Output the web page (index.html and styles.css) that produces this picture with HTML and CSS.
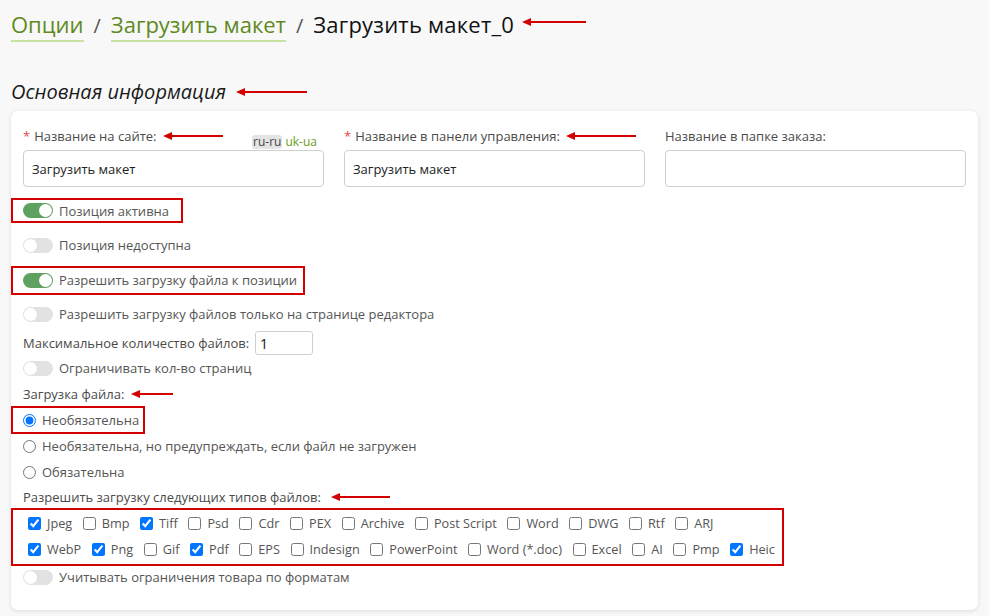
FILE: index.html
```html
<!DOCTYPE html>
<html lang="ru">
<head>
<meta charset="utf-8">
<title>Загрузить макет_0</title>
<link rel="stylesheet" href="styles.css">
</head>
<body>
<nav class="crumbs">
  <a class="crumb-link" href="#">Опции</a><span class="crumb-sep">/</span><a class="crumb-link" href="#">Загрузить макет</a><span class="crumb-sep">/</span><span class="crumb-current">Загрузить макет_0</span><svg class="arrow arrow-crumb" width="64" height="10" viewBox="0 0 64 10"><path d="M8 5H64" stroke="#d40000" stroke-width="2"/><path d="M0 5L9 1V9Z" fill="#d40000"/></svg>
</nav>

<h2 class="section-title">Основная информация
  <svg class="arrow arrow-section" width="71" height="10" viewBox="0 0 71 10"><path d="M8 5H71" stroke="#d40000" stroke-width="2"/><path d="M0 5L9 1V9Z" fill="#d40000"/></svg>
</h2>

<section class="card">
  <div class="fields">
    <div class="field">
      <div class="field-label">
        <span><span class="req">*</span> Название на сайте:<svg class="arrow arrow-label" width="60" height="10" viewBox="0 0 60 10"><path d="M8 5H60" stroke="#d40000" stroke-width="2"/><path d="M0 5L9 1V9Z" fill="#d40000"/></svg></span>
        <span class="langs"><span class="lang lang-active">ru-ru</span><span class="lang">uk-ua</span></span>
      </div>
      <input class="text-input" type="text" value="Загрузить макет">
    </div>
    <div class="field">
      <div class="field-label">
        <span><span class="req">*</span> Название в панели управления:<svg class="arrow arrow-label" width="70" height="10" viewBox="0 0 70 10"><path d="M8 5H70" stroke="#d40000" stroke-width="2"/><path d="M0 5L9 1V9Z" fill="#d40000"/></svg></span>
      </div>
      <input class="text-input" type="text" value="Загрузить макет">
    </div>
    <div class="field">
      <div class="field-label"><span>Название в папке заказа:</span></div>
      <input class="text-input" type="text" value="">
    </div>
  </div>

  <div class="rows">
    <div class="row row-t1">
      <div class="hl hl-a"><span class="switch on"></span><span class="row-text">Позиция активна</span></div>
    </div>
    <div class="row row-t2"><span class="switch"></span><span class="row-text">Позиция недоступна</span></div>
    <div class="row row-t3">
      <div class="hl hl-b"><span class="switch on"></span><span class="row-text">Разрешить загрузку файла к позиции</span></div>
    </div>
    <div class="row row-t4"><span class="switch"></span><span class="row-text">Разрешить загрузку файлов только на странице редактора</span></div>
    <div class="row row-num"><span class="row-plain">Максимальное количество файлов:</span><input class="num-input" type="text" value="1"></div>
    <div class="row"><span class="switch"></span><span class="row-text">Ограничивать кол-во страниц</span></div>
    <div class="row"><span class="row-plain">Загрузка файла:</span><svg class="arrow arrow-label2" width="42" height="10" viewBox="0 0 42 10"><path d="M8 5H42" stroke="#d40000" stroke-width="2"/><path d="M0 5L9 1V9Z" fill="#d40000"/></svg></div>
    <div class="row">
      <label class="hl hl-c"><input type="radio" name="upl" class="radio" checked><span class="radio-text">Необязательна</span></label>
    </div>
    <div class="row"><label class="radio-label"><input type="radio" name="upl" class="radio"><span class="radio-text">Необязательна, но предупреждать, если файл не загружен</span></label></div>
    <div class="row"><label class="radio-label"><input type="radio" name="upl" class="radio"><span class="radio-text">Обязательна</span></label></div>
    <div class="row row-short"><span class="row-plain">Разрешить загрузку следующих типов файлов:</span><svg class="arrow arrow-label3" width="59" height="10" viewBox="0 0 59 10"><path d="M8 5H59" stroke="#d40000" stroke-width="2"/><path d="M0 5L9 1V9Z" fill="#d40000"/></svg></div>
    <div class="types">
      <div class="types-row">
        <label class="cb"><input type="checkbox" checked><span>Jpeg</span></label>
        <label class="cb"><input type="checkbox"><span>Bmp</span></label>
        <label class="cb"><input type="checkbox" checked><span>Tiff</span></label>
        <label class="cb"><input type="checkbox"><span>Psd</span></label>
        <label class="cb"><input type="checkbox"><span>Cdr</span></label>
        <label class="cb"><input type="checkbox"><span>PEX</span></label>
        <label class="cb"><input type="checkbox"><span>Archive</span></label>
        <label class="cb"><input type="checkbox"><span>Post Script</span></label>
        <label class="cb"><input type="checkbox"><span>Word</span></label>
        <label class="cb"><input type="checkbox"><span>DWG</span></label>
        <label class="cb"><input type="checkbox"><span>Rtf</span></label>
        <label class="cb"><input type="checkbox"><span>ARJ</span></label>
      </div>
      <div class="types-row">
        <label class="cb"><input type="checkbox" checked><span>WebP</span></label>
        <label class="cb"><input type="checkbox" checked><span>Png</span></label>
        <label class="cb"><input type="checkbox"><span>Gif</span></label>
        <label class="cb"><input type="checkbox" checked><span>Pdf</span></label>
        <label class="cb"><input type="checkbox"><span>EPS</span></label>
        <label class="cb"><input type="checkbox"><span>Indesign</span></label>
        <label class="cb"><input type="checkbox"><span>PowerPoint</span></label>
        <label class="cb"><input type="checkbox"><span>Word (*.doc)</span></label>
        <label class="cb"><input type="checkbox"><span>Excel</span></label>
        <label class="cb"><input type="checkbox"><span>AI</span></label>
        <label class="cb"><input type="checkbox"><span>Pmp</span></label>
        <label class="cb"><input type="checkbox" checked><span>Heic</span></label>
      </div>
    </div>
    <div class="row row-last"><span class="switch"></span><span class="row-text">Учитывать ограничения товара по форматам</span></div>
  </div>
</section>
</body>
</html>
```

FILE: styles.css
```css
* { box-sizing: border-box; }

html, body {
  margin: 0;
  padding: 0;
  background: #f8f8f8;
}

body {
  padding: 0 11px;
  font-family: "Open Sans", "Noto Sans", "Liberation Sans", sans-serif;
  color: #4a4a4a;
  font-size: 13px;
  height: 616px;
  overflow: hidden;
  white-space: nowrap;
}

.arrow { display: inline-block; vertical-align: middle; }

/* breadcrumbs */
.crumbs {
  display: flex;
  align-items: baseline;
  height: 32px;
  margin-top: 9px;
  font-size: 22px;
  line-height: 30px;
}
.crumb-link {
  color: #5e8a1d;
  text-decoration: none;
  border-bottom: 2px solid #c8e2a4;
  padding-bottom: 1px;
}
.crumb-sep {
  color: #555;
  margin: 0 10px;
  font-size: 20px;
}
.crumb-current { color: #111; letter-spacing: 0.2px; }
.arrow-crumb { margin-left: 8px; align-self: center; margin-top: -6px; }

/* section title */
.section-title {
  margin: 37px 0 0;
  height: 27px;
  font-size: 20px;
  font-weight: 400;
  font-style: italic;
  color: #1a1a1a;
  line-height: 27px;
  display: flex;
  align-items: center;
}
.arrow-section { margin-left: 10px; }

/* card */
.card {
  margin-top: 6px;
  background: #fff;
  border-radius: 7px;
  box-shadow: 0 1px 4px rgba(0,0,0,0.12);
  padding: 16px 12px 22px;
}

.fields {
  display: grid;
  grid-template-columns: repeat(3, 1fr);
  column-gap: 20px;
}
.field-label {
  display: flex;
  justify-content: space-between;
  align-items: flex-end;
  height: 21px;
  line-height: 18px;
  margin-bottom: 2px;
}
.field-label > span:first-child {
  display: flex;
  align-items: center;
  align-self: flex-start;
}
.req { color: #e34a4a; margin-right: 4px; }
.arrow-label { margin-left: 6px; }
.langs {
  display: flex;
  font-size: 12px;
  line-height: 14px;
  margin-right: 6px;
  margin-bottom: -1px;
}
.lang { color: #6a9c24; padding: 0 1px; }
.lang-active {
  color: #444;
  background: #e4e4e4;
  border-radius: 3px;
  margin-right: 2px;
}
.text-input {
  display: block;
  width: 100%;
  height: 37px;
  border: 1px solid #cfcfcf;
  border-radius: 4px;
  padding: 0 8px;
  font-family: inherit;
  font-size: 13px;
  color: #222;
  background: #fff;
}

/* rows */
.rows { margin-top: 7px; display: flex; flex-direction: column; }
.row {
  display: flex;
  align-items: center;
  height: 26px;
}
.row-t1 { height: 33px; }
.row-t2 { height: 36px; }
.row-t3 { height: 34px; }
.row-t4 { height: 34px; }
.row-num { height: 24px; }
.row-short { height: 23px; }
.row-last { height: 22px; }

.hl {
  display: flex;
  align-items: center;
  border: 2px solid #d40000;
  margin-left: -12px;
  padding-left: 10px;
  width: fit-content;
}
.hl-a { height: 25px; padding-right: 12px; }
.hl-b { height: 29px; padding-right: 6px; }
.hl-c { height: 28px; padding-right: 4px; }

.switch {
  position: relative;
  display: inline-block;
  width: 30px;
  height: 15px;
  border-radius: 8px;
  background: #e2e2e2;
  flex: none;
}
.switch::after {
  content: "";
  position: absolute;
  left: 1px;
  top: 1px;
  width: 13px;
  height: 13px;
  border-radius: 50%;
  background: #fff;
}
.switch.on { background: #5fa15f; }
.switch.on::after { left: 16px; }

.row-text { margin-left: 6px; color: #555; }
.row-plain { color: #4a4a4a; }

.num-input {
  width: 58px;
  height: 24px;
  margin-left: 6px;
  border: 1px solid #cfcfcf;
  border-radius: 3px;
  padding: 0 4px;
  font-family: inherit;
  font-size: 14px;
  color: #111;
}
.arrow-label2 { margin-left: 7px; }
.arrow-label3 { margin-left: 10px; }

.radio-label { display: flex; align-items: center; }
.radio {
  margin: 0;
  width: 13px;
  height: 13px;
  accent-color: #0075ff;
}
.radio-text { margin-left: 6px; color: #555; }

/* file types */
.types {
  border: 2px solid #d40000;
  margin-left: -12px;
  width: 773px;
  height: 58px;
  padding-left: 15px;
}
.types-row {
  display: flex;
  align-items: center;
  height: 26px;
  gap: 10.6px;
}
.cb {
  display: flex;
  align-items: center;
  color: #555;
  font-size: 12.7px;
}
.cb input {
  margin: 0 6px 0 0;
  width: 13px;
  height: 13px;
  accent-color: #0075ff;
}
```
